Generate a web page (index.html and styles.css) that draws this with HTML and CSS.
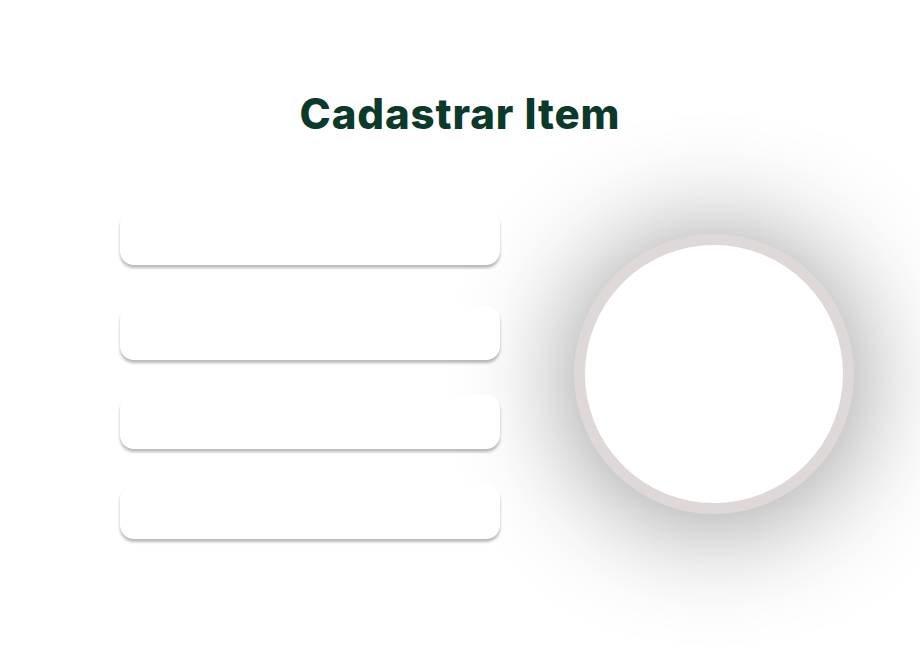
FILE: index.html
```html
<!DOCTYPE html>
<html lang="pt-BR">
<head>
<meta charset="utf-8">
<title>Cadastrar Item</title>
<link rel="stylesheet" href="styles.css">
</head>
<body>
<main class="page">
  <h1 class="title">Cadastrar Item</h1>
  <section class="content">
    <form class="form">
      <input class="field field-first" type="text" aria-label="Nome">
      <input class="field" type="text" aria-label="Descrição">
      <input class="field" type="text" aria-label="Preço">
      <input class="field" type="text" aria-label="Quantidade">
    </form>
    <div class="photo-wrap">
      <div class="photo"></div>
    </div>
  </section>
</main>
</body>
</html>
```

FILE: styles.css
```css
* { box-sizing: border-box; }
html, body { margin: 0; padding: 0; background: #ffffff; }
body { width: 920px; height: 660px; overflow: hidden; font-family: "Inter", "Noto Sans", sans-serif; }
.page { display: flex; flex-direction: column; align-items: center; padding-top: 89px; }
.title {
  margin: 0;
  font-family: "Inter", sans-serif;
  font-weight: 800;
  font-size: 42px;
  line-height: 50px;
  color: #0b3a2b;
  letter-spacing: 0.9px;
}
.content {
  width: 100%;
  display: flex;
  align-items: center;
  padding-left: 120px;
  margin-top: 72px;
  gap: 74px;
}
.form {
  position: relative;
  z-index: 2;
  display: flex;
  flex-direction: column;
  gap: 35px;
  width: 380px;
}
.field {
  display: block;
  width: 380px;
  height: 54px;
  border: none;
  outline: none;
  border-radius: 14px;
  background: #ffffff;
  box-shadow: 0 3px 3px rgba(0, 0, 0, 0.28);
}
.field-first { margin-bottom: 6px; }
.field:last-child { margin-top: 1px; }
.photo-wrap { position: relative; z-index: 1; margin-top: -2px; }
.photo {
  width: 280px;
  height: 280px;
  border-radius: 50%;
  background: #ffffff;
  border: 11px solid #ded8d8;
  box-shadow: 0 6px 120px rgba(0, 0, 0, 0.45);
}
```
